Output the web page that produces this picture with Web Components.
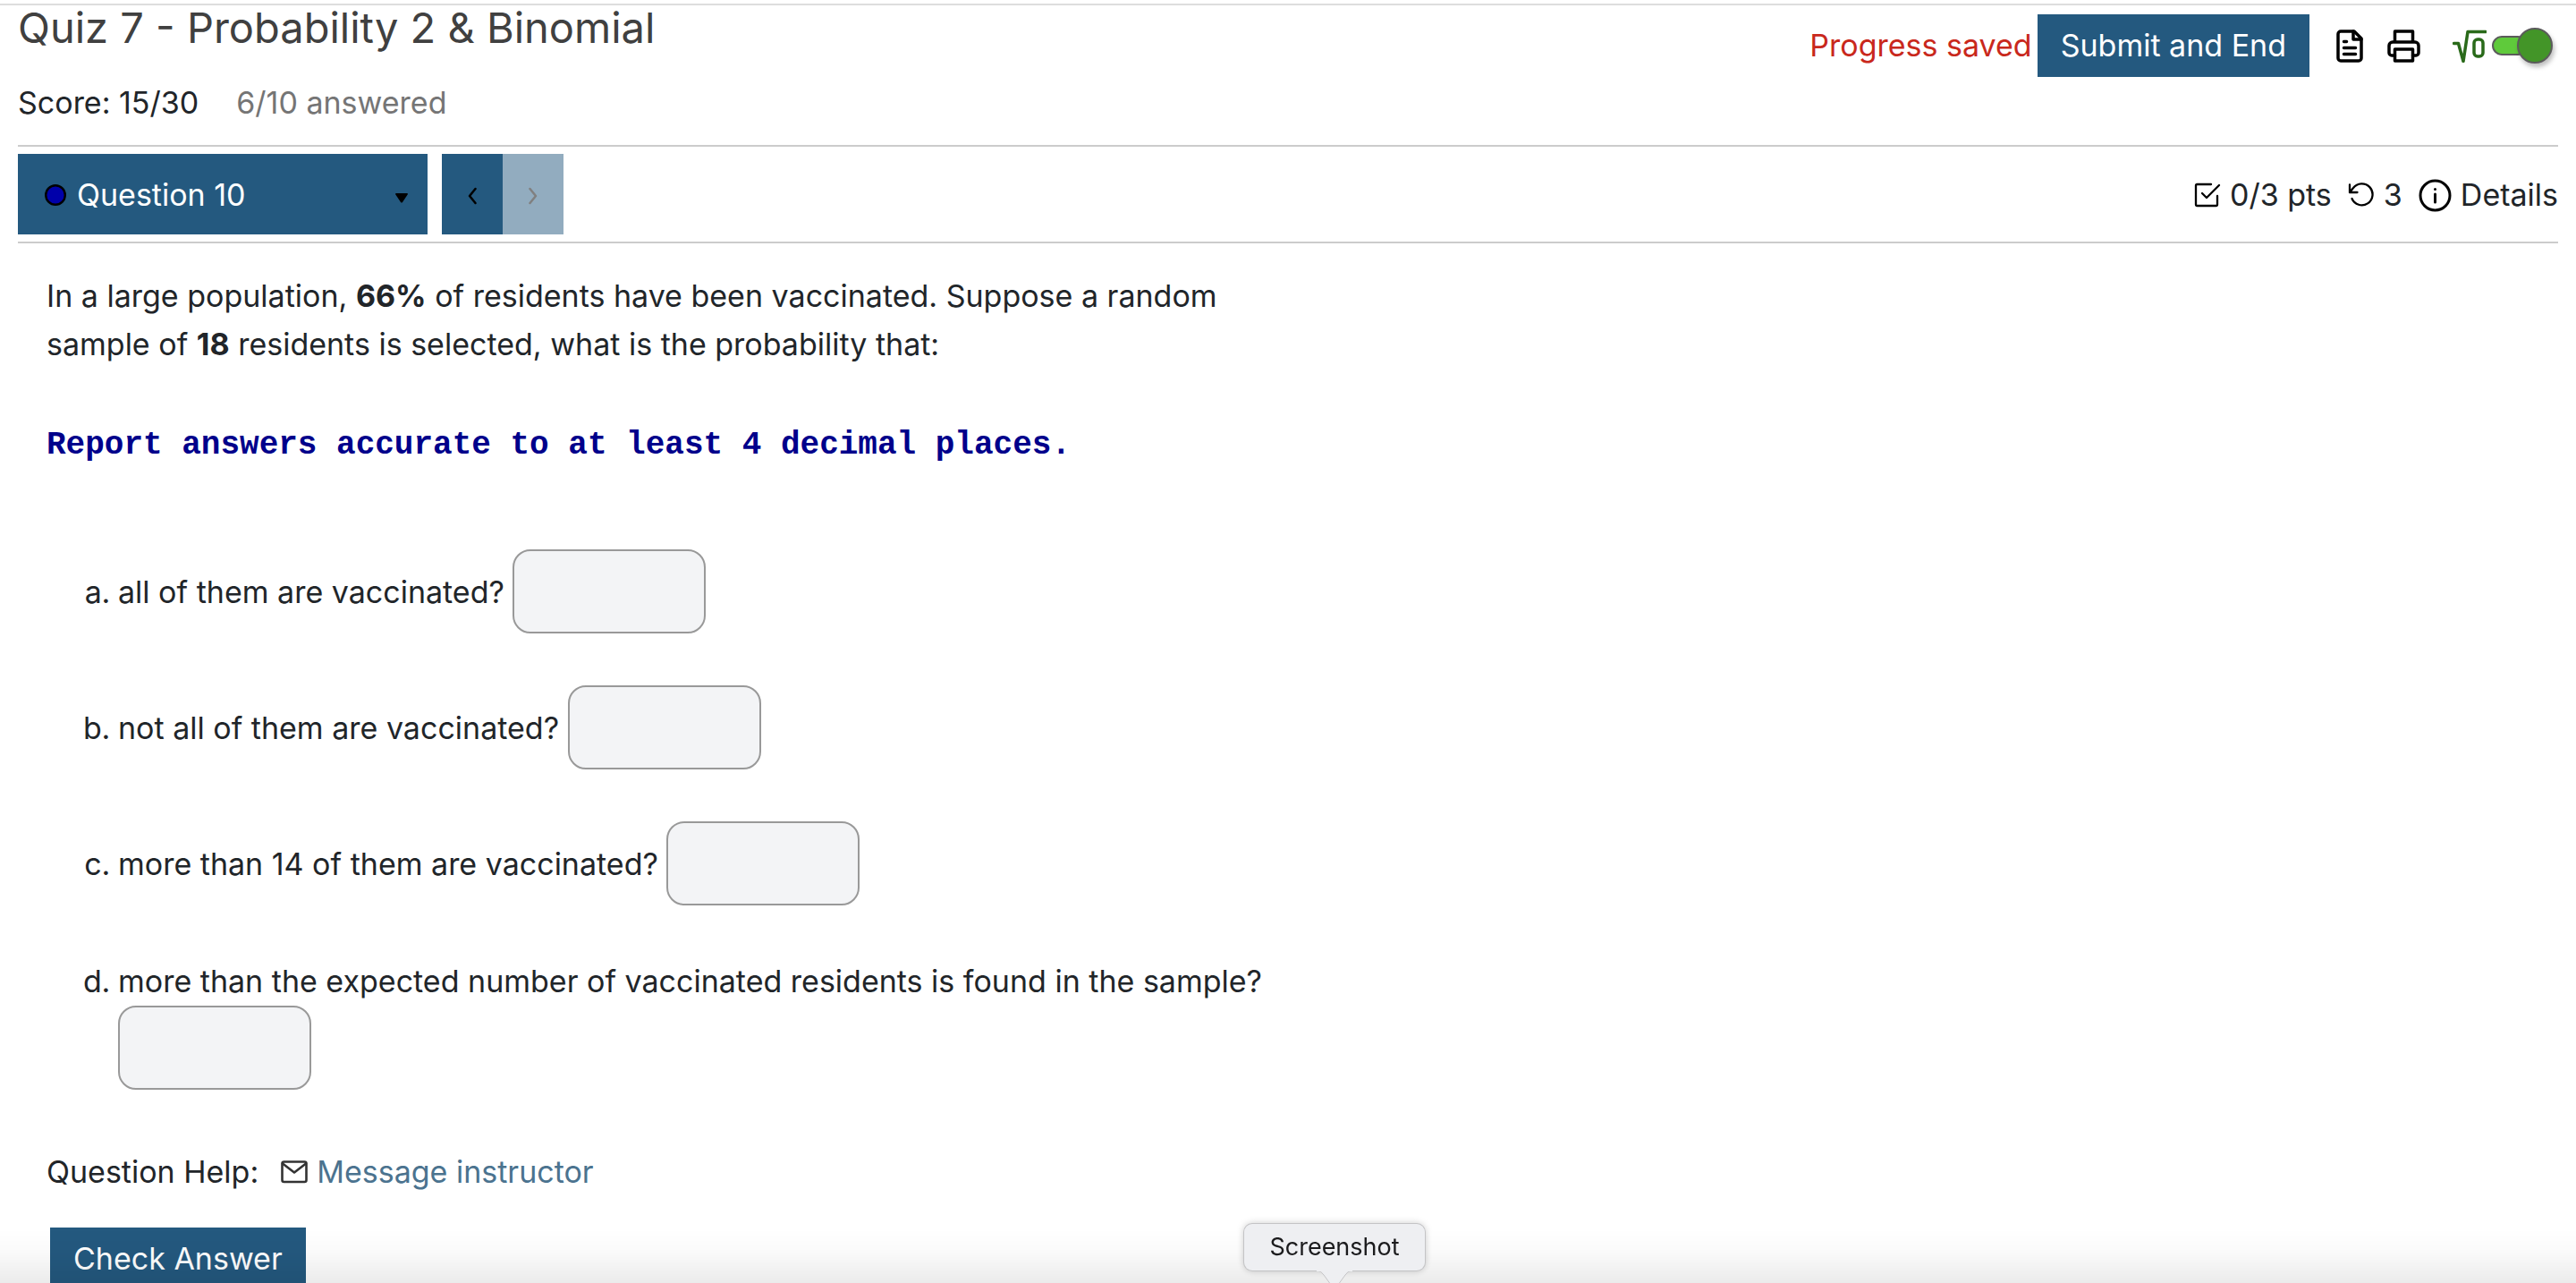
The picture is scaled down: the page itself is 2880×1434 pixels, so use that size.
<!DOCTYPE html>
<html lang="en">
<head>
<meta charset="UTF-8">
<title>Quiz 7 - Probability 2 &amp; Binomial</title>
<style>
    body {
        margin: 0;
        background: #fff;
        color: #212529;
        font-family: Inter, "Liberation Sans", sans-serif;
        font-size: 34px;
        line-height: 54px;
    }
</style>
</head>
<body>
<quiz-page>
    <quiz-header slot="header" titulo="Quiz 7 - Probability 2 &amp; Binomial" score="15/30" answered="6/10"></quiz-header>
    <quiz-nav slot="nav" question="10" pts="0/3" attempts="3"></quiz-nav>
    <quiz-question>
        <span slot="text">In a large population, <b>66%</b> of residents have been vaccinated. Suppose a random<br>sample of <b>18</b> residents is selected, what is the probability that:</span>
        <span slot="note">Report answers accurate to at least 4 decimal places.</span>
    </quiz-question>
    <quiz-help></quiz-help>
</quiz-page>
<dock-tooltip>Screenshot</dock-tooltip>

<script>
/* Icon drawings, each with the size of its own box */
const icons = {
    file: [30, 37, `<g stroke-width="3.5"><path d="M20 2H5a3 3 0 0 0-3 3v27a3 3 0 0 0 3 3h20a3 3 0 0 0 3-3V10z"/><path d="M19 2v9h9M8.5 13.5h3M8.5 20.5h13M8.5 27.5h13"/></g>`],
    print: [37, 37, `<g stroke-width="3.5"><path d="M8.5 13V2h20v11M8.5 29H5a3 3 0 0 1-3-3v-8a4 4 0 0 1 4-4h25a4 4 0 0 1 4 4v8a3 3 0 0 1-3 3h-3.5"/><path d="M8.5 22h20v13h-20z"/></g>`],
    root: [38, 37, `<g stroke="#2a6a1a" stroke-width="3.5"><path d="M1.5 15.5h5l5.5 20L17 2.5h20"/><rect x="24" y="11" width="10" height="19" rx="4"/></g>`],
    check: [30, 28, `<g stroke-width="2.3"><path d="M19 2H3.500A1.500 1.500 0 0 0 2 3.500v21A1.500 1.500 0 0 0 3.500 26h21a1.500 1.500 0 0 0 1.500-1.500V15"/><path d="M9 12l5 5L28 3"/></g>`],
    undo: [30, 28, `<g stroke-width="2.3"><path d="M2 2.500V11h8.500M2 11l4-5a12 12 0 1 1-1.500 12"/></g>`],
    info: [37, 37, `<g stroke-width="3"><circle cx="18.500" cy="18.500" r="16.500"/><path d="M18.500 17v9M18.500 11.500v.1"/></g>`],
    mail: [30, 26, `<g stroke="#333" stroke-width="2.6"><rect x="1.500" y="1.500" width="27" height="22.500" rx="2"/><path d="M2 3.500l13 10 13-10"/></g>`],
    prev: [10, 20, `<path stroke-width="2.5" d="M8.500 2L2 10l6.500 8"/>`],
    next: [10, 20, `<path stroke-width="2.5" d="M1.500 2L8 10l-6.500 8"/>`],
    dot: [24, 24, `<circle cx="12" cy="12" r="10.8" fill="#00a" stroke-width="2.4"/>`],
    caret: [14, 11, `<path fill="#000" stroke="none" d="M1 0h12q1 0 1 1L8 10q-1 1-2 0L0 1q0-1 1-1"/>`]
};

/* Base class: every element only has to write its template and its styles */
class QuizElement extends HTMLElement {
    constructor() {
        super();
        this.attachShadow({ mode: "open" });
    }

    connectedCallback() {
        const template = document.createElement("template");
        template.innerHTML = `<style>
            * { box-sizing: border-box; }
            button, select, input { font: inherit; border: 0; border-radius: 0; margin: 0; }
            ${this.getStyles()}
        </style>${this.getTemplate()}`;
        this.shadowRoot.appendChild(template.content.cloneNode(true));
    }
}

class QuizIcon extends QuizElement {
    getTemplate() {
        const [w, h, shape] = icons[this.getAttribute("name")];
        return `<svg width="${w}" height="${h}" viewBox="0 0 ${w} ${h}" fill="none" stroke="currentColor" stroke-linecap="round" stroke-linejoin="round" aria-hidden="true">${shape}</svg>`;
    }

    getStyles() {
        return `
            :host { display: inline-flex; flex: none; color: #000; }
            :host([muted]) { color: #808080; }
        `;
    }
}

class QuizPage extends QuizElement {
    getTemplate() {
        return `
            <slot name="header"></slot>
            <slot name="nav"></slot>
            <main><slot></slot></main>
        `;
    }

    getStyles() {
        return `
            :host {
                display: block;
                height: 100vh;
                overflow: hidden;
                padding: 4px 20px 0;
                box-sizing: border-box;
                background: linear-gradient(#ddd, #ddd) top 4px left / 100% 2px no-repeat;
            }
            main { padding: 32px 32px 0; }
        `;
    }
}

class QuizHeader extends QuizElement {
    getTemplate() {
        return `
            <div>
                <h1>${this.getAttribute("titulo")}</h1>
                <p><span>Score: ${this.getAttribute("score")}</span><span class="answered">${this.getAttribute("answered")} answered</span></p>
            </div>
            <div class="tools">
                <span class="saved">Progress saved</span>
                <button class="submit">Submit and End</button>
                <button class="tool" aria-label="Notes"><quiz-icon name="file"></quiz-icon></button>
                <button class="tool" aria-label="Print"><quiz-icon name="print"></quiz-icon></button>
                <label><quiz-icon name="root"></quiz-icon><input type="checkbox" aria-label="Math entry" checked></label>
            </div>
        `;
    }

    getStyles() {
        return `
            :host { display: flex; justify-content: space-between; height: 158px; }
            h1 { margin: 0; font-size: 47px; font-weight: 400; line-height: 54px; color: #404040; }
            p { display: flex; gap: 42px; margin: 30px 0 0; }
            .answered { color: #757575; }
            .tools { display: flex; align-items: center; height: 70px; margin-top: 12px; }
            .saved { color: #c9281c; margin-right: 6px; }
            .submit { height: 70px; padding: 0 26px; background: #24597f; color: #fff; }
            .tool { display: flex; padding: 0; margin-left: 30px; background: none; }
            .tool + .tool { margin-left: 27px; }
            label { display: flex; align-items: center; gap: 6px; margin: 0 6px 0 36px; }
            input {
                appearance: none;
                display: flex;
                align-items: center;
                width: 68px;
                height: 40px;
            }
            input::before {
                content: "";
                box-sizing: border-box;
                width: 40px;
                height: 22px;
                border: 2px solid #5b5b5b;
                border-radius: 11px;
                background: #5fca3b;
            }
            input::after {
                content: "";
                box-sizing: border-box;
                width: 40px;
                height: 40px;
                margin-left: -12px;
                border: 2px solid #5b5b5b;
                border-radius: 50%;
                background: #439528;
                box-shadow: 2px 4px 5px rgba(0, 0, 0, .25);
            }
        `;
    }
}

class QuizNav extends QuizElement {
    getTemplate() {
        return `
            <div class="picker">
                <quiz-icon name="dot"></quiz-icon>
                <select aria-label="Question"><option>Question ${this.getAttribute("question")}</option></select>
                <quiz-icon name="caret"></quiz-icon>
            </div>
            <button aria-label="Previous question"><quiz-icon name="prev"></quiz-icon></button>
            <button aria-label="Next question" disabled><quiz-icon name="next" muted></quiz-icon></button>
            <div class="info">
                <quiz-icon name="check"></quiz-icon><span>${this.getAttribute("pts")} pts</span>
                <quiz-icon name="undo"></quiz-icon><span>${this.getAttribute("attempts")}</span>
                <quiz-icon name="info"></quiz-icon><span>Details</span>
            </div>
        `;
    }

    getStyles() {
        return `
            :host {
                display: flex;
                align-items: center;
                padding: 8px 0;
                border: solid #ccc;
                border-width: 2px 0;
            }
            .picker {
                display: grid;
                grid-template-columns: 30px 1fr 20px;
                align-items: center;
                width: 458px;
                height: 90px;
                padding: 2px 16px 0 30px;
                margin-right: 16px;
                background: #24597f;
            }
            .picker quiz-icon:last-child { padding-top: 6px; }
            select {
                appearance: none;
                height: 88px;
                padding: 0 6px;
                background: none;
                color: #fff;
            }
            button {
                display: flex;
                align-items: center;
                justify-content: center;
                width: 68px;
                height: 90px;
                padding: 4px 0 0;
                background: #24597f;
            }
            button:disabled { background: #92acbf; }
            .info { display: flex; align-items: center; gap: 10px; margin-left: auto; padding-top: 2px; }
            .info span + quiz-icon { margin-left: 8px; }
        `;
    }
}

class QuizQuestion extends QuizElement {
    getTemplate() {
        const parts = [
            "all of them are vaccinated?",
            "not all of them are vaccinated?",
            "more than 14 of them are vaccinated?",
            "more than the expected number of vaccinated residents is found in the sample?"
        ];
        return `
            <p><slot name="text"></slot></p>
            <p class="note"><slot name="note"></slot></p>
            <ol>
                ${parts.map((part, i) => `<li><label for="answer${i}">${part}</label> <input type="text" id="answer${i}"></li>`).join("")}
            </ol>
        `;
    }

    getStyles() {
        return `
            :host { display: block; max-width: 1400px; }
            p { margin: 0; }
            .note {
                margin-top: 59px;
                color: #00008b;
                font: bold 36px/54px "Courier New", "Liberation Mono", monospace;
            }
            ol {
                display: flex;
                flex-direction: column;
                gap: 58px;
                margin: 89px 0 0;
                padding: 0 0 0 80px;
                list-style: lower-alpha;
            }
            input {
                width: 216px;
                height: 94px;
                padding: 0 16px;
                border: 2px solid #999;
                border-radius: 20px;
                background: #f3f4f6;
            }
        `;
    }
}

class QuizHelp extends QuizElement {
    getTemplate() {
        return `
            <p>Question Help: <quiz-icon name="mail"></quiz-icon><a href="#">Message instructor</a></p>
            <button>Check Answer</button>
        `;
    }

    getStyles() {
        return `
            :host { display: block; padding-top: 65px; }
            p { display: flex; align-items: center; margin: 0; }
            quiz-icon { margin: 0 10px 0 25px; }
            a { color: #4b738f; text-decoration: none; }
            button { height: 70px; margin: 35px 0 0 4px; padding: 0 26px; background: #24597f; color: #fff; }
        `;
    }
}

/* Lies over the bottom edge of the page, with the shade of the dock behind it */
class DockTooltip extends QuizElement {
    getTemplate() {
        return `
            <span><slot></slot></span>
            <svg width="40" height="14" viewBox="0 0 40 14" aria-hidden="true">
                <path d="M0 0q5 0 8 5l8 11h8l8-11q3-5 8-5" fill="#eeeff2" stroke="#c4c4c6"/>
                <path d="M0 0h40" stroke="#eeeff2" stroke-width="2"/>
            </svg>
        `;
    }

    getStyles() {
        return `
            :host {
                position: fixed;
                left: 0;
                right: 0;
                bottom: 0;
                display: flex;
                flex-direction: column;
                align-items: center;
                padding: 20px 0 0 104px;
                color: #1b1b1d;
                font-size: 27px;
                line-height: 52px;
                background: linear-gradient(transparent 30%, rgba(0, 0, 0, .02) 60%, rgba(0, 0, 0, .08));
                pointer-events: none;
            }
            span {
                padding: 0 28px;
                border-radius: 9px;
                background: #eeeff2;
                box-shadow: 0 0 0 1px #c4c4c6, 0 0 8px rgba(0, 0, 0, .25);
            }
            svg { display: block; }
        `;
    }
}

customElements.define("quiz-icon", QuizIcon);
customElements.define("quiz-page", QuizPage);
customElements.define("quiz-header", QuizHeader);
customElements.define("quiz-nav", QuizNav);
customElements.define("quiz-question", QuizQuestion);
customElements.define("quiz-help", QuizHelp);
customElements.define("dock-tooltip", DockTooltip);
</script>
</body>
</html>
